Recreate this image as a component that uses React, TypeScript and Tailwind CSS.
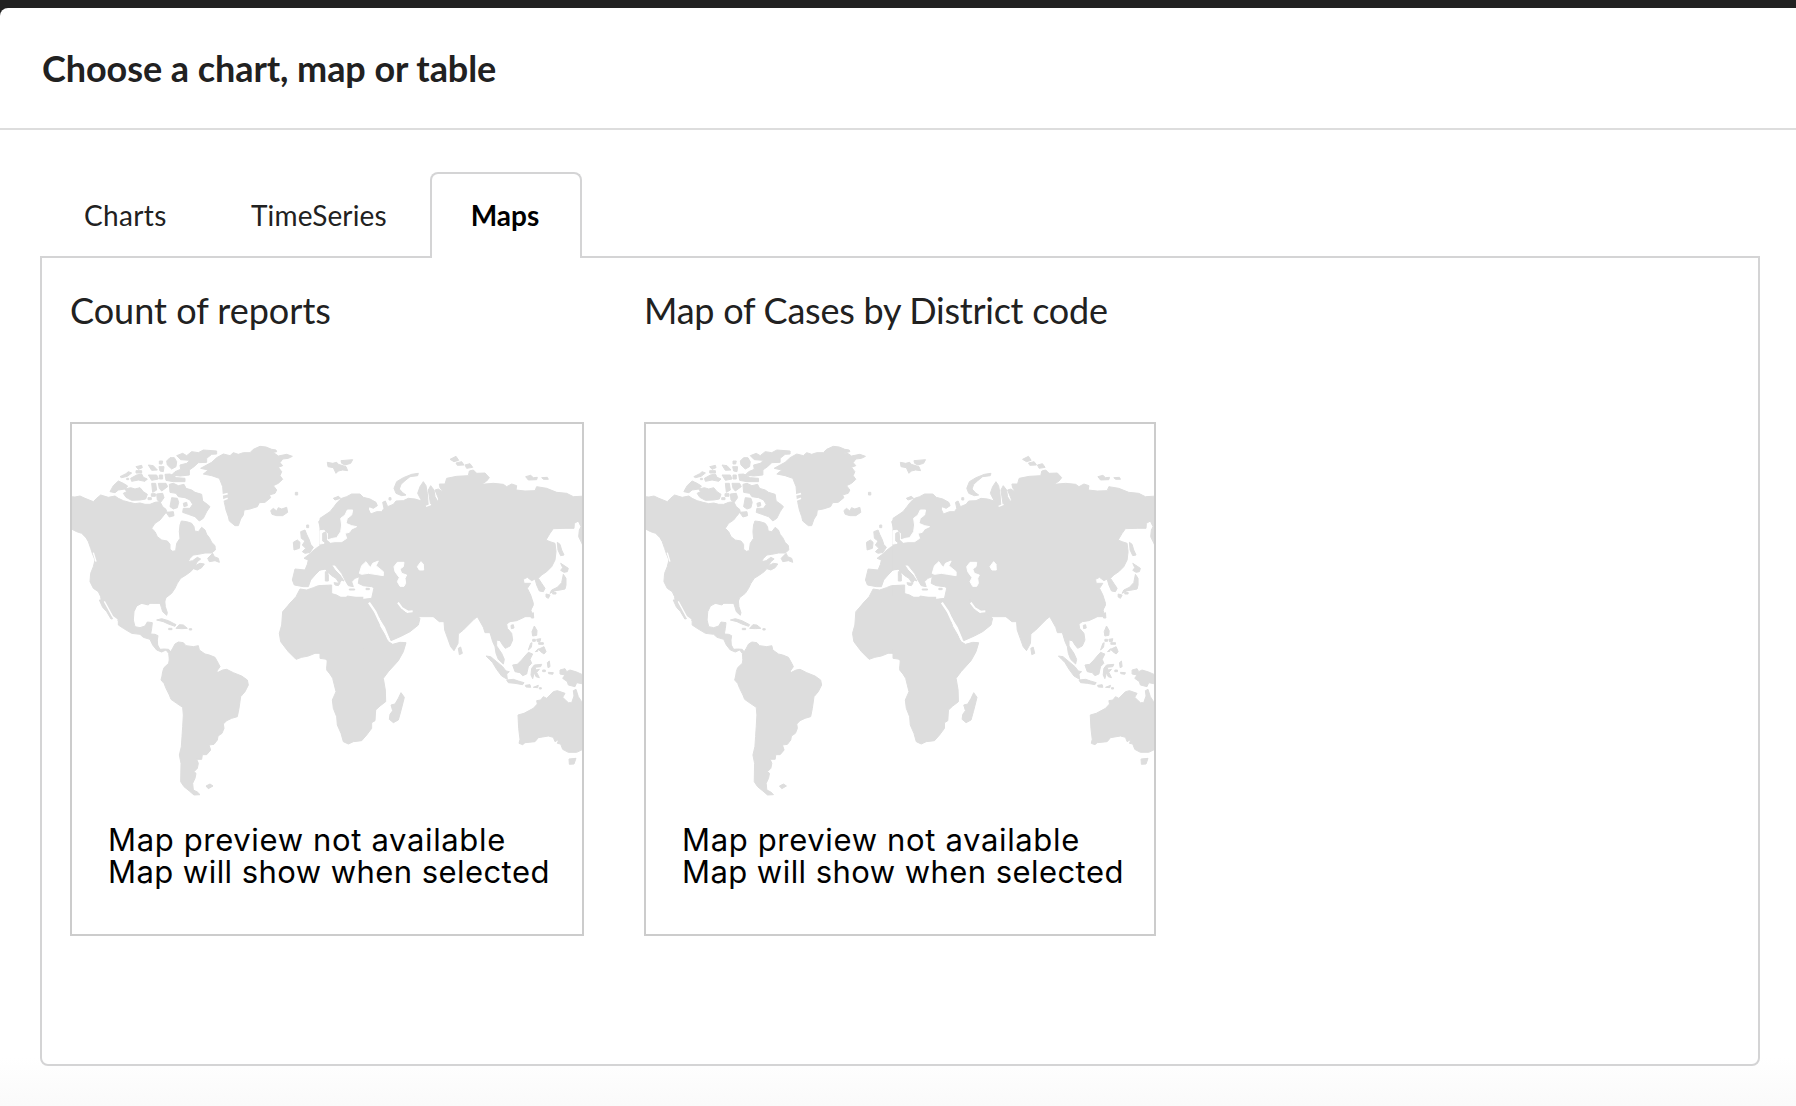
function WorldMap() {
  return (
    <svg viewBox="36 27 1530 1530" preserveAspectRatio="none" className="absolute inset-0 h-full w-full" fill="#dddddd" stroke="#dddddd" strokeWidth="3" strokeLinejoin="round">
      {/* North Atlantic, North America, Greenland */}
      <g>
        <path d="M30 245L45 246 60 243 75 250 100 260 110 250 122 240 135 244 145 247 165 243 175 250 190 257 208 262 225 266 240 264 255 268 270 268 285 262 300 260 308 275 318 283 320 290 308 305 300 315 285 325 275 340 285 350 292 365 305 375 322 378 330 388 330 403 338 409 347 407 350 385 360 370 358 350 360 330 364 318 380 320 395 325 402 335 404 348 415 350 425 337 435 345 440 358 448 368 455 382 465 392 466 405 455 414 435 414 415 418 400 420 390 430 384 440 398 437 412 427 422 432 412 440 405 452 420 445 433 447 425 458 412 465 400 461 392 470 378 480 362 490 352 505 345 520 335 535 318 548 312 565 125 565 122 545 115 530 100 520 90 500 92 475 100 455 105 435 97 415 92 400 85 380 78 368 65 355 50 350 30 340Z" />
        <path d="M422 160L440 150 455 142 470 128 490 117 510 122 520 113 535 118 550 113 570 113 580 103 600 94 618 96 635 103 648 105 650 110 632 114 645 116 655 123 680 118 697 124 685 130 668 132 660 143 668 152 655 157 665 170 660 182 668 193 655 205 640 212 650 225 645 235 628 240 632 248 615 262 598 263 592 275 570 282 552 285 550 300 542 312 535 332 525 332 508 318 505 305 498 285 493 262 490 240 488 215 478 190 455 182 430 177 445 165Z" />
        <path d="M443 430L458 415 463 425 475 430 478 442 465 437 448 440ZM632 287L640 280 650 288 655 278 665 282 680 277 683 292 668 302 650 302 636 298ZM706 232h7v8h-7z" />
        <path d="M322 150L320 138 330 128 343 128 350 140 348 155 335 162ZM350 122L368 115 380 122 395 110 415 113 430 105 470 108 470 117 455 118 440 130 440 142 415 143 402 155 388 165 388 180 360 183 335 180 345 170 362 163 360 150 380 145 390 136 362 134Z" />
        <path d="M315 178L330 177 350 188 375 190 375 200 340 200 318 196ZM328 208L340 205 355 212 372 208 378 220 395 225 405 232 425 238 428 258 442 268 450 275 440 290 430 310 418 318 405 305 385 298 368 292 370 280 390 280 398 268 390 255 375 248 355 245 348 235 330 232ZM335 248L352 250 356 262 352 278 340 282 330 275ZM370 265L380 262 382 272 372 275ZM318 292L340 290 342 302 328 306ZM295 205L318 205 323 215 305 228 298 220ZM275 205L287 205 290 225 278 232ZM265 180L290 180 295 192 275 196ZM265 150L280 152 292 165 275 166ZM297 155L312 155 310 170 300 168ZM298 138L308 138 306 147 298 147ZM228 155L245 151 247 158 235 163ZM228 167h17v7h-17zM290 237L308 235 312 248 302 262 292 255ZM274 236h12v8h-12zM264 248h10v6h-10zM298 180h10v12h-10z" />
        <path d="M150 230L160 212 175 198 190 205 203 213 195 222 175 225 165 233ZM180 185L198 176 205 170 215 174 202 184 185 188ZM212 190L230 180 245 177 250 187 262 192 255 199 235 195 215 199ZM190 235L200 230 195 222 212 218 225 222 240 218 250 230 262 238 257 252 240 255 215 256 198 247ZM200 190h6v4h-6z" />
        <path d="M722 350L735 345 740 358 748 375 752 388 760 397 750 412 735 415 727 410 737 400 727 390 735 378 724 370ZM700 382L712 375 720 382 718 400 702 405ZM740 330h6v8h-6z" />
        <path d="M705 462L735 465 742 448 745 435 732 430 745 420 762 405 775 395 790 388 800 380 797 365 792 358 815 355 815 462 800 462 780 465 765 480 752 495 745 515 730 515 703 510 697 495ZM776 320L790 305 815 290 815 340 795 348 782 342ZM815 510L775 512 760 518 740 525 720 522 708 545 690 565 680 580 668 605 815 605Z" />
        <path d="M100 413L108 440" stroke="#fff" strokeWidth="4" />
        <path d="M486 240L503 236M488 256L503 250" stroke="#fff" strokeWidth="5" />
      </g>

      {/* Europe and northern Asia */}
      <g transform="translate(780 0)">
        <path d="M0 310L15 300 30 290 42 275 52 262 65 250 80 245 95 237 120 237 130 247 150 252 168 262 172 272 160 280 148 275 145 282 152 297 170 290 185 290 192 280 188 262 196 258 203 275 220 268 228 258 250 257 265 250 285 252 305 258 293 235 300 215 310 200 318 212 322 235 325 275 332 270 328 245 325 225 332 212 342 225 345 245 355 262 356 252 345 225 355 222 370 232 360 218 358 207 375 207 380 190 410 184 445 182 448 168 460 165 470 175 495 174 508 188 500 198 485 208 520 205 550 208 560 215 575 207 590 212 588 225 615 228 645 227 650 215 680 220 710 232 740 235 760 245 800 243 800 390 788 390 776 365 778 345 783 335 775 318 763 325 762 340 735 340 700 341 690 355 678 375 690 380 705 385 708 410 705 435 695 455 680 470 665 480 655 490 665 505 675 520 670 530 658 528 650 510 645 492 635 497 622 487 610 493 612 505 632 505 622 520 632 540 640 565 632 585 640 605 0 605 0 512 20 512 30 525 32 535 50 540 75 555 82 543 110 548 130 553 155 550 162 518 155 515 130 512 115 505 118 485 105 490 95 500 100 515 85 512 75 495 65 475 45 450 35 450 45 465 60 480 72 498 65 495 58 505 48 490 35 482 22 470 15 460 0 465Z" />
        <path d="M222 220L230 200 250 188 275 178 295 175 293 182 270 185 255 197 243 208 238 222 248 233 258 240 245 242 228 235ZM22 142L38 145 50 142 55 148 78 155 83 167 68 165 55 168 48 175 40 158 24 155ZM63 137L98 134 92 145 75 150 65 145ZM390 133L408 124 416 136 402 140ZM408 144L425 140 432 150 412 151ZM435 150L450 146 458 157 440 160ZM617 185L632 181 640 188 652 187 650 194 625 195ZM665 188L682 187 685 193 670 193ZM40 250L55 244 62 250 45 255ZM207 248h6v7h-6z" />
        <path d="M712 382L720 388 725 405 732 420 722 422 714 405ZM722 445L730 450 745 460 742 470 732 472 722 466 728 458ZM730 478L738 490 738 510 735 522 720 525 705 527 690 535 695 525 712 517 725 503ZM678 537L690 540 685 550 678 546ZM698 532h10v5h-10zM16 470h8v10h-8zM16 480h9v18h-9zM42 503L60 505 55 512 45 510ZM88 522h16v3h-16zM138 520h10v4h-10z" />
        <g fill="#fff" stroke="#fff">
          <path d="M0 347L12 346 22 355 22 375 38 370 50 368 62 350 65 330 62 310 75 300 82 285 98 285 95 300 82 310 78 325 95 332 110 335 95 342 88 352 75 355 80 370 65 380 45 380 30 382 22 372 14 352 12 385 0 387Z" />
          <path d="M118 475L125 452 138 440 145 450 152 457 158 445 175 438 168 452 190 470 190 482 165 478 145 475 125 478Z" />
          <path d="M222 455L232 442 252 442 250 455 240 462 245 475 260 480 255 490 257 505 252 514 240 514 232 500 238 488 225 470Z" />
          <path d="M292 455L303 440 310 448 311 465 298 465Z" />
        </g>
        <path d="M8 355L18 350 20 370 15 382 8 378Z" />
        <path d="M318 274L333 268" stroke="#fff" strokeWidth="4" fill="none" />
        <path d="M147 567L165 590 172 605M232 562L245 582 265 592" stroke="#fff" strokeWidth="6" fill="none" />
      </g>

      {/* Central and South America */}
      <g transform="translate(0 555)">
        <path d="M125 0L133 8 145 28 160 50 175 62 175 75 190 85 215 100 240 103 250 112 270 118 278 135 290 150 305 156 318 150 326 160 328 178 335 160 326 148 312 147 300 148 293 135 292 120 294 107 285 103 272 102 275 85 277 68 262 66 255 78 240 83 225 80 220 60 222 35 230 18 245 10 265 15 270 8 300 9 304 22 308 35 320 46 322 38 316 20 314 0Z" />
        <path d="M118 0L128 22 140 35 153 57 158 56 148 35 134 12 128 0Z" />
        <path d="M133 4L158 50 172 60" stroke="#fff" strokeWidth="4" fill="none" />
        <path d="M328 178L326 190 312 203 308 215 306 228 303 240 312 250 318 265 328 285 333 298 350 310 368 322 370 345 368 380 366 410 364 440 358 465 363 490 362 545 372 560 388 573 402 585 420 584 412 576 400 570 398 550 405 535 408 520 402 515 412 505 415 490 410 478 425 478 427 464 440 464 452 450 447 435 462 433 472 420 474 408 486 400 492 385 490 372 500 362 515 355 532 350 537 325 542 290 555 275 565 255 562 240 545 228 520 218 500 208 488 210 474 217 470 214 480 200 475 190 465 172 448 165 435 162 418 150 415 137 400 140 378 137 370 128 355 126 345 132 338 145 330 158Z" />
        <path d="M438 558L450 552 459 558 445 566ZM290 60L305 56 325 62 348 74 345 79 325 72 310 65ZM358 74L370 75 382 85 365 86 348 85ZM326 85h10v4h-10zM388 86h7v4h-7z" />
        <path d="M700 0L690 10 668 35 665 75 658 100 662 125 685 155 708 178 725 172 745 168 765 160 780 160 795 175 805 185 800 210 815 228 815 0Z" />
      </g>

      {/* Africa, southern Asia, Australia */}
      <g transform="translate(780 555)">
        <path d="M0 0V175L22 178 20 205 38 235 48 275 37 300 40 325 50 350 52 375 63 400 70 425 85 432 100 425 125 422 140 405 155 385 155 368 165 362 167 330 180 318 197 305 196 270 190 235 205 215 235 182 250 155 258 128 240 127 218 133 205 125 195 105 180 80 172 55 160 35 148 8 145 0Z" />
        <path d="M145 0L152 10 170 35 180 55 190 75 205 105 213 122 245 108 270 95 295 75 300 55 285 45 280 30 275 42 262 42 250 32 236 14 230 0Z" />
        <path d="M147 8L165 34 178 62 192 84 206 118" stroke="#fff" strokeWidth="7" fill="none" />
        <path d="M232 0L245 18 262 30 280 28 300 38 318 38 340 50 358 65 372 65 374 90 383 115 392 140 402 152 414 130 415 102 430 90 445 75 462 58 472 50 490 82 495 98 510 98 518 125 525 140 528 160 535 178 550 192 553 178 545 160 530 138 530 120 540 122 548 135 556 145 570 138 578 120 575 100 562 85 560 72 570 65 590 62 612 52 630 35 640 15 634 0Z" />
        <path d="M234 8L246 24 264 35 278 34" stroke="#fff" strokeWidth="6" fill="none" />
        <path d="M213 315L225 312 235 295 243 278 253 292 248 312 242 335 235 360 220 368 208 358 210 343 218 332ZM415 145L422 141 427 160 418 164ZM498 168L512 170 530 185 548 200 558 213 568 215 560 222 562 238 545 228 530 208 518 188 508 178ZM560 240L580 238 595 243 612 248 608 254 585 250 565 248ZM578 195L592 193 605 180 615 168 625 157 638 162 630 178 635 190 625 200 620 222 608 227 600 218 585 215ZM573 76L580 74 582 84 574 86ZM633 42L640 38 641 54 634 54ZM636 95L643 78 651 92 650 106 638 108ZM625 150L632 130 636 128 634 142ZM650 118L662 116 660 125 652 125ZM656 128h14v5h-14zM655 148L672 140 678 155 672 162 662 155ZM638 118h8v6h-8zM646 155L655 146 653 154Z" />
        <path d="M635 205L643 195 665 193 662 200 645 202 648 210 658 208 650 217 658 233 648 230 643 218 638 236 633 225ZM682 188L688 183 690 200 684 203ZM668 210h8v5h-8zM685 217L700 218 698 223 686 221ZM616 256L630 254 632 262 618 261ZM640 262L655 256 653 263ZM658 263h6v4h-6zM720 210L735 206 740 215 750 210 770 216 790 225 790 252 770 248 765 260 745 255 742 245 728 235 735 225 720 222Z" />
        <path d="M594 345L612 340 640 325 652 312 650 302 662 300 670 290 680 295 690 285 700 275 712 272 735 280 728 292 745 308 755 308 762 288 760 272 768 268 775 290 785 305 800 330 800 440 785 450 770 457 745 457 728 448 722 432 712 430 717 418 705 425 700 412 685 408 655 413 645 425 615 428 608 434 597 430 600 418 596 385ZM747 477L768 475 762 492 748 493Z" />
      </g>
      {/* solid land where the four map regions meet */}
      <path d="M745 545H910V700H745ZM1060 560H1360V585H1060Z" stroke="none" />
    </svg>
  );
}

function MapCard({ title, titleClass }: { title: string; titleClass: string }) {
  return (
    <section>
      <h2 className={`h-[138px] pt-px text-[36px] leading-[50px] whitespace-nowrap ${titleClass}`}>{title}</h2>
      <div className="relative h-[514px] border-2 border-[#cccccc] bg-white">
        <WorldMap />
        <div className="absolute top-[400px] left-[36px] font-[Inter] text-[31px] leading-[32px] whitespace-nowrap text-black">
          <p className="tracking-[0.65px]">Map preview not available</p>
          <p className="tracking-[0.44px]">Map will show when selected</p>
        </div>
      </div>
    </section>
  );
}

export default function App() {
  return (
    <div className="h-[1106px] overflow-hidden bg-[#222222] pt-2 font-[Lato] text-[#212121]">
      <div className="flex h-full flex-col rounded-tl-lg bg-white">
        <header className="h-[122px] shrink-0 border-b-2 border-[#dddddd] px-[42px] pt-[35px] text-[36px] leading-[50px] font-bold tracking-[-0.07px]">
          Choose a chart, map or table
        </header>
        <main className="flex-1 bg-linear-to-b from-white from-95% to-[#fafafa] px-10 pt-[42px]">
          <nav className="relative z-10 -mb-0.5 flex h-[86px] pl-0.5 text-[28px] leading-[86px]">
            <div className="w-[167px] pl-[42px] tracking-[0.35px]">Charts</div>
            <div className="w-[221px] pl-[42px] tracking-[0.15px]">TimeSeries</div>
            <div className="w-[152px] rounded-t-lg border-2 border-b-0 border-[#d4d4d5] bg-white pr-0.5 text-center leading-[82px] font-bold text-black">Maps</div>
          </nav>
          <div className="grid h-[810px] w-[1720px] grid-cols-[514px_512px] gap-x-[60px] rounded-b-lg border-2 border-[#d4d4d5] bg-white pt-[26px] pl-7">
            <MapCard title="Count of reports" titleClass="tracking-normal" />
            <MapCard title="Map of Cases by District code" titleClass="tracking-[-0.25px]" />
          </div>
        </main>
      </div>
    </div>
  );
}
